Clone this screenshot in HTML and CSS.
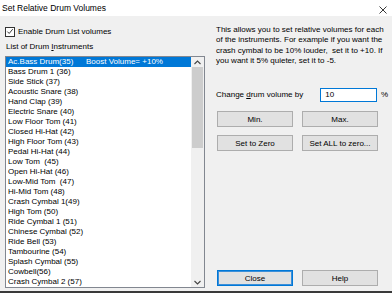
FILE: index.html
```html
<!DOCTYPE html>
<html>
<head>
<meta charset="utf-8">
<link rel="stylesheet" href="styles.css">
</head>
<body>
<div class="dialog">
  <div class="titlebar">
    <span class="title">Set Relative Drum Volumes</span>
    <svg class="close-x" width="8" height="8" viewBox="0 0 8 8"><path d="M0.5 0.5 L7.5 7.5 M7.5 0.5 L0.5 7.5" stroke="#222" stroke-width="0.9" fill="none"/></svg>
  </div>
  <div class="content">
    <div class="left">
      <div class="check-row">
        <span class="checkbox"><svg width="9" height="9" viewBox="0 0 9 9"><path d="M1.5 4.6 L3.6 6.7 L7.6 1.8" stroke="#222" stroke-width="1" fill="none"/></svg></span>
        <span>Enable Drum List volumes</span>
      </div>
      <div class="list-label">List of Drum <u>I</u>nstruments</div>
      <div class="listbox">
        <div class="items">
          <div class="item selected"><span class="name">Ac.Bass Drum(35)</span><span>Boost Volume= +10%</span></div>
          <div class="item">Bass Drum 1 (36)</div>
          <div class="item">Side Stick (37)</div>
          <div class="item">Acoustic Snare (38)</div>
          <div class="item">Hand Clap (39)</div>
          <div class="item">Electric Snare (40)</div>
          <div class="item">Low Floor Tom (41)</div>
          <div class="item">Closed Hi-Hat (42)</div>
          <div class="item">High Floor Tom (43)</div>
          <div class="item">Pedal Hi-Hat (44)</div>
          <div class="item">Low Tom&nbsp; (45)</div>
          <div class="item">Open Hi-Hat (46)</div>
          <div class="item">Low-Mid Tom&nbsp; (47)</div>
          <div class="item">Hi-Mid Tom (48)</div>
          <div class="item">Crash Cymbal 1(49)</div>
          <div class="item">High Tom (50)</div>
          <div class="item">Ride Cymbal 1 (51)</div>
          <div class="item">Chinese Cymbal (52)</div>
          <div class="item">Ride Bell (53)</div>
          <div class="item">Tambourine (54)</div>
          <div class="item">Splash Cymbal (55)</div>
          <div class="item">Cowbell(56)</div>
          <div class="item">Crash Cymbal 2 (57)</div>
        </div>
        <div class="scrollbar">
          <div class="arrow"><svg width="7" height="5" viewBox="0 0 7 5"><path d="M0.5 4 L3.5 1 L6.5 4" stroke="#444" stroke-width="1.1" fill="none"/></svg></div>
          <div class="track"><div class="thumb"></div></div>
          <div class="arrow"><svg width="7" height="5" viewBox="0 0 7 5"><path d="M0.5 1 L3.5 4 L6.5 1" stroke="#444" stroke-width="1.1" fill="none"/></svg></div>
        </div>
      </div>
    </div>
    <div class="right">
      <p class="info">This allows you to set relative volumes for each of the instruments. For example if you want the crash cymbal to be 10% louder,&nbsp; set it to +10. If you want it 5% quieter, set it to -5.</p>
      <div class="volume-row">
        <span class="vol-label">Change <u>d</u>rum volume by</span>
        <span class="input">10</span>
        <span class="pct">%</span>
      </div>
      <div class="btn-grid">
        <div class="btn">Min.</div>
        <div class="btn">Max.</div>
        <div class="btn">Set to Zero</div>
        <div class="btn">Set ALL to zero...</div>
      </div>
      <div class="btn-grid bottom">
        <div class="btn default">Close</div>
        <div class="btn">Help</div>
      </div>
    </div>
  </div>
</div>
</body>
</html>
```

FILE: styles.css
```css
* { box-sizing: border-box; }
html, body {
  margin: 0;
  padding: 0;
  background: #f0f0f0;
}
body {
  font-family: "Liberation Sans", Arial, sans-serif;
  font-size: 8px;
  color: #000;
}
.dialog {
  width: 392px;
  height: 293px;
  background: #f0f0f0;
  border-bottom: 2px solid #3a3a3a;
  display: flex;
  flex-direction: column;
}
.titlebar {
  height: 16px;
  background: #ffffff;
  display: flex;
  align-items: center;
  justify-content: space-between;
  padding: 0 5px 0 2px;
}
.title {
  font-size: 8.5px;
  line-height: 12px;
}
.close-x {
  margin-top: 3px;
}
.content {
  flex: 1;
  display: flex;
}
.left {
  width: 205px;
  padding-left: 5px;
  display: flex;
  flex-direction: column;
}
.check-row {
  margin-top: 10px;
  height: 11px;
  display: flex;
  align-items: center;
  gap: 3px;
}
.checkbox {
  width: 10px;
  height: 10px;
  border: 1px solid #333;
  background: #fff;
  display: flex;
  align-items: center;
  justify-content: center;
}
.list-label {
  margin-top: 4px;
  height: 11px;
  line-height: 11px;
  padding-left: 1px;
}
.listbox {
  margin-top: 4px;
  height: 232px;
  border: 1px solid #828790;
  background: #fff;
  display: flex;
  overflow: hidden;
}
.items {
  flex: 1;
}
.item {
  height: 10px;
  line-height: 10px;
  padding-left: 2px;
  white-space: nowrap;
}
.item.selected {
  background: #0078d7;
  color: #fff;
}
.item .name {
  display: inline-block;
  width: 78px;
}
.scrollbar {
  width: 13px;
  background: #f0f0f0;
  display: flex;
  flex-direction: column;
}
.arrow {
  height: 10px;
  display: flex;
  align-items: center;
  justify-content: center;
}
.track {
  flex: 1;
  padding: 0 1px;
}
.thumb {
  height: 81px;
  background: #cdcdcd;
}
.right {
  margin-left: 11px;
  width: 172px;
  display: flex;
  flex-direction: column;
  padding-bottom: 5px;
}
.info {
  margin: 9px 0 0 0;
  line-height: 10.3px;
}
.volume-row {
  margin-top: 21px;
  height: 15px;
  display: flex;
  align-items: center;
}
.vol-label {
  width: 105px;
}
.input {
  width: 57px;
  height: 14px;
  border: 1px solid #0078d7;
  background: #fff;
  padding-left: 4px;
  line-height: 12px;
}
.pct {
  margin-left: 4px;
}
.btn-grid {
  margin-top: 9px;
  display: grid;
  grid-template-columns: 76px 76px;
  column-gap: 9px;
  row-gap: 8px;
  padding-left: 1px;
}
.btn-grid.bottom {
  margin-top: auto;
}
.btn {
  height: 16px;
  background: #e1e1e1;
  border: 1px solid #adadad;
  display: flex;
  align-items: center;
  justify-content: center;
}
.btn.default {
  border: 1px solid #0078d7;
  box-shadow: inset 0 0 0 1px #3c8fd9;
}
```
